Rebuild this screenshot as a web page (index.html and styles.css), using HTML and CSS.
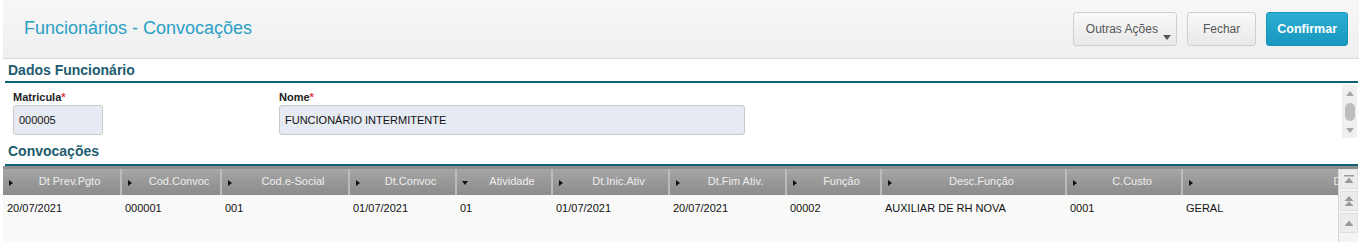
FILE: index.html
```html
<!DOCTYPE html>
<html lang="pt-BR">
<head>
    <meta charset="UTF-8">
    <title>Funcionários - Convocações</title>
    <link rel="stylesheet" href="styles.css">
</head>
<body>
    <div class="topbar">
        <h1 class="page-title">Funcionários - Convocações</h1>
        <div class="actions">
            <div class="btn btn-menu">Outras Ações<span class="caret"></span></div>
            <div class="btn btn-close">Fechar</div>
            <div class="btn btn-primary">Confirmar</div>
        </div>
    </div>

    <div class="content">
        <div class="section-title">Dados Funcionário</div>
        <div class="fields">
            <div class="field">
                <label>Matricula<span class="req">*</span></label>
                <div class="input input-short">000005</div>
            </div>
            <div class="field">
                <label>Nome<span class="req">*</span></label>
                <div class="input input-long">FUNCIONÁRIO INTERMITENTE</div>
            </div>
            <div class="vscroll">
                <span class="arr arr-up"></span>
                <span class="thumb"></span>
                <span class="arr arr-down"></span>
            </div>
        </div>

        <div class="section-title section-title-2">Convocações</div>
    </div>

    <div class="grid">
        <div class="grid-main">
            <table>
                <colgroup>
                    <col class="w118"><col class="w100"><col class="w128"><col class="w107">
                    <col class="w96"><col class="w117"><col class="w117"><col class="w95">
                    <col class="w185"><col class="w116"><col class="w355">
                </colgroup>
                <thead>
                    <tr>
                        <th><span>Dt Prev.Pgto</span></th>
                        <th><span>Cod.Convoc</span></th>
                        <th><span>Cod.e-Social</span></th>
                        <th><span>Dt.Convoc</span></th>
                        <th class="sorted"><span>Atividade</span></th>
                        <th><span>Dt.Inic.Ativ</span></th>
                        <th><span>Dt.Fim Ativ.</span></th>
                        <th><span>Função</span></th>
                        <th><span>Desc.Função</span></th>
                        <th><span>C.Custo</span></th>
                        <th><span>Desc.C.Custo</span></th>
                    </tr>
                </thead>
                <tbody>
                    <tr>
                        <td>20/07/2021</td>
                        <td>000001</td>
                        <td>001</td>
                        <td>01/07/2021</td>
                        <td>01</td>
                        <td>01/07/2021</td>
                        <td>20/07/2021</td>
                        <td>00002</td>
                        <td>AUXILIAR DE RH NOVA</td>
                        <td>0001</td>
                        <td>GERAL</td>
                    </tr>
                </tbody>
            </table>
        </div>
        <div class="grid-nav">
            <div class="nav-btn">
                <svg width="12" height="10" viewBox="0 0 12 10"><rect x="1" y="1" width="10" height="1.5" fill="#9a9a9a"/><path d="M6 3.5 L10.5 9 L1.5 9 Z" fill="#9a9a9a"/></svg>
            </div>
            <div class="nav-btn">
                <svg width="12" height="12" viewBox="0 0 12 12"><path d="M6 1 L10.5 6 L1.5 6 Z" fill="#9a9a9a"/><path d="M6 6 L10.5 11 L1.5 11 Z" fill="#9a9a9a"/></svg>
            </div>
            <div class="nav-btn">
                <svg width="12" height="8" viewBox="0 0 12 8"><path d="M6 1.5 L10.5 7 L1.5 7 Z" fill="#9a9a9a"/></svg>
            </div>
        </div>
    </div>
</body>
</html>
```

FILE: styles.css
```css
body {
    font-family: "Liberation Sans", Arial, sans-serif;
    margin: 0;
    padding: 0;
    background: #fff;
    overflow: hidden;
}

/* barra do topo */
.topbar {
    margin-left: 3px;
    height: 58px;
    border-bottom: 1px solid #d9d9d9;
    background: linear-gradient(#f7f7f7, #eeeff0);
    display: flex;
    align-items: center;
    justify-content: space-between;
}
.page-title {
    margin: 0 0 1px 21px;
    font-size: 18px;
    font-weight: normal;
    color: #2a9fc6;
}
.actions {
    display: flex;
    gap: 10px;
    padding-right: 11px;
}
.btn {
    position: relative;
    height: 32px;
    line-height: 32px;
    padding: 0 13px;
    border: 1px solid #cfcfcf;
    border-radius: 3px;
    background: linear-gradient(#f9f9f9, #e9e9e9);
    color: #555;
    font-size: 12px;
    cursor: pointer;
}
.btn-menu {
    padding: 0 18px 0 12px;
}
.btn-close {
    padding: 0 15px;
}
.caret {
    position: absolute;
    right: 5px;
    bottom: 5px;
    border-left: 4px solid transparent;
    border-right: 4px solid transparent;
    border-top: 5px solid #555;
}
.btn-primary {
    padding: 0 10px;
    background: linear-gradient(#2badd1, #1898bf);
    border-color: #1a93b8;
    color: #fff;
    font-weight: bold;
    font-size: 12.5px;
}

/* formulário */
.content {
    padding: 0 1px 0 5px;
}
.section-title {
    padding: 3px 0 3px 3px;
    line-height: 16px;
    font-size: 14px;
    font-weight: bold;
    color: #1d5b6f;
    border-bottom: 2px solid #0e6378;
}
.section-title-2 {
    padding: 2px 0 5px 3px;
}
.fields {
    display: flex;
    height: 58px;
}
.field {
    padding: 8px 0 0 8px;
}
.field + .field {
    padding-left: 176px;
}
label {
    display: block;
    height: 13px;
    line-height: 13px;
    margin-bottom: 1px;
    font-size: 11px;
    font-weight: bold;
    color: #222;
}
.req {
    color: #e0344c;
}
.input {
    box-sizing: border-box;
    height: 30px;
    line-height: 28px;
    padding: 0 5px;
    border: 1px solid #c9c9c9;
    border-radius: 3px;
    background: #e6eaf2;
    font-size: 11px;
    color: #111;
}
.input-short {
    width: 90px;
}
.input-long {
    width: 466px;
}
.vscroll {
    margin: 2px 1px 0 auto;
    width: 15px;
    height: 53px;
    background: #f0f0f0;
    display: flex;
    flex-direction: column;
    align-items: center;
    justify-content: space-between;
    padding: 6px 0 5px;
    box-sizing: border-box;
}
.arr {
    border-left: 4px solid transparent;
    border-right: 4px solid transparent;
}
.arr-up {
    border-bottom: 5px solid #a8a8a8;
}
.arr-down {
    border-top: 5px solid #a8a8a8;
}
.thumb {
    width: 10px;
    height: 18px;
    border-radius: 5px;
    background: #bdbdbd;
}

/* grid de convocações */
.grid {
    display: flex;
    margin-left: 3px;
    margin-right: 1px;
    border-top: 3px solid #8e8e8e;
    height: 75px;
    background: #f9f9f9;
}
.grid-main {
    width: 1335px;
    overflow: hidden;
}
table {
    table-layout: fixed;
    border-collapse: collapse;
    width: 1534px;
    font-size: 11px;
}
.w118 { width: 118px; }
.w100 { width: 100px; }
.w128 { width: 128px; }
.w107 { width: 107px; }
.w96 { width: 96px; }
.w117 { width: 117px; }
.w95 { width: 95px; }
.w185 { width: 185px; }
.w116 { width: 116px; }
.w355 { width: 355px; }

th {
    position: relative;
    height: 26px;
    padding: 0 0 3px 16px;
    box-sizing: border-box;
    background: linear-gradient(#a6a6a6, #8b8b8b);
    border-right: 2px solid #bcbcbc;
    color: #eeeeee;
    font-weight: normal;
    text-align: center;
    white-space: nowrap;
    overflow: hidden;
}
th::before {
    content: "";
    position: absolute;
    left: 6px;
    top: 11px;
    border-top: 3px solid transparent;
    border-bottom: 3px solid transparent;
    border-left: 4px solid #111;
}
th.sorted::before {
    top: 12px;
    left: 5px;
    border-left: 3px solid transparent;
    border-right: 3px solid transparent;
    border-top: 4px solid #111;
    border-bottom: 0;
}
td {
    height: 24px;
    padding: 7px 0 0 4px;
    vertical-align: top;
    line-height: 13px;
    color: #111;
    white-space: nowrap;
    overflow: hidden;
}
.grid-nav {
    flex: 1;
    border-left: 1px solid #d4d4d4;
    background: #f4f4f4;
    display: flex;
    flex-direction: column;
    gap: 2px;
    padding: 0 0 0 1px;
}
.nav-btn {
    height: 18px;
    background: #ececec;
    border: 1px solid #e0e0e0;
    display: flex;
    align-items: center;
    justify-content: center;
}
```
